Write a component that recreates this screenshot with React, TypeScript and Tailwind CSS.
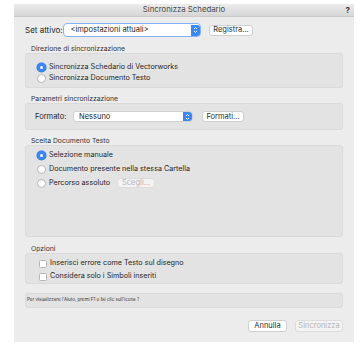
const font = { fontFamily: "Inter, 'Noto Sans', sans-serif" };

function Radio({ checked }: { checked?: boolean }) {
  return checked ? (
    <span className="flex h-[9px] w-[9px] shrink-0 items-center justify-center rounded-full bg-[#3b87f6] shadow-[0_0_0_0.5px_#2f74e0]">
      <span className="h-[3px] w-[3px] rounded-full bg-white" />
    </span>
  ) : (
    <span className="h-[9px] w-[9px] shrink-0 rounded-full border border-[#b5b5b5] bg-white" />
  );
}

function Checkbox() {
  return <span className="h-[8px] w-[8px] shrink-0 rounded-[1.5px] border border-[#b5b5b5] bg-white" />;
}

function Stepper() {
  return (
    <span className="flex h-full w-[9px] items-center justify-center rounded-r-[3px] bg-[#3b87f6]">
      <svg width="5" height="8" viewBox="0 0 5 8" fill="none" stroke="white" strokeWidth="0.9">
        <path d="M1 3 L2.5 1.5 L4 3" />
        <path d="M1 5 L2.5 6.5 L4 5" />
      </svg>
    </span>
  );
}

function Button({ children, w, disabled }: { children: React.ReactNode; w: string; disabled?: boolean }) {
  return (
    <span
      className={`flex h-full ${w} items-center justify-center rounded-[3px] border text-[7.5px] leading-none ${
        disabled ? "border-[#dcdcdc] bg-[#f3f3f3] text-[#b3b3b3]" : "border-[#cfcfcf] bg-white text-[#2a2a2a]"
      }`}
    >
      {children}
    </span>
  );
}

function SectionLabel({ children, mt }: { children: React.ReactNode; mt: string }) {
  return <div className={`${mt} h-[9px] pl-[6px] text-[6.8px] leading-[9px] text-[#333]`}>{children}</div>;
}

export default function App() {
  return (
    <div className="h-[349px] w-[363px] bg-white pl-[14px] pt-[4px]" style={font}>
      <div className="flex h-[338px] w-[340px] flex-col bg-[#ececec] text-[#262626]">
        <div className="relative flex h-[13px] items-center justify-center border-b border-[#cacaca] bg-gradient-to-b from-[#ececec] to-[#d6d6d6] text-[7.8px] text-[#4a4a4a]">
          Sincronizza Schedario
          <span className="absolute right-[4px] top-[2px] text-[8px] font-bold leading-none text-[#333]">?</span>
        </div>

        <div className="flex flex-col px-[11px]">
          <div className="mt-[6px] flex h-[14px] items-center text-[8px]">
            <span className="w-[38px]">Set attivo:</span>
            <span className="flex h-[14px] w-[138px] items-center rounded-[4px] border-[1.5px] border-[#83b3f4] bg-white p-[0.5px] text-[7.5px]">
              <span className="flex-1 pl-[6px]">&lt;impostazioni attuali&gt;</span>
              <Stepper />
            </span>
            <span className="ml-[8px] h-[11px]">
              <Button w="w-[44px]">Registra...</Button>
            </span>
          </div>

          <SectionLabel mt="mt-[7px]">Direzione di sincronizzazione</SectionLabel>
          <div className="flex h-[35px] flex-col rounded-[3px] border border-[#dadada] bg-[#e3e3e3] pl-[11px] pt-[8px] text-[7.2px]">
            <div className="flex h-[11px] items-center gap-[3px]">
              <Radio checked />
              Sincronizza Schedario di Vectorworks
            </div>
            <div className="flex h-[11px] items-center gap-[3px]">
              <Radio />
              Sincronizza Documento Testo
            </div>
          </div>

          <SectionLabel mt="mt-[6px]">Parametri sincronizzazione</SectionLabel>
          <div className="flex h-[27px] items-center rounded-[3px] border border-[#dadada] bg-[#e3e3e3] pl-[9px] text-[7.5px]">
            <span className="w-[38px]">Formato:</span>
            <span className="flex h-[11px] w-[120px] items-center rounded-[3px] border border-[#d0d0d0] bg-white">
              <span className="flex-1 pl-[5px]">Nessuno</span>
              <Stepper />
            </span>
            <span className="ml-[9px] h-[11px]">
              <Button w="w-[42px]">Formati...</Button>
            </span>
          </div>

          <SectionLabel mt="mt-[6px]">Scelta Documento Testo</SectionLabel>
          <div className="flex h-[92px] flex-col rounded-[3px] border border-[#dadada] bg-[#e3e3e3] pl-[11px] pt-[2px] text-[7.2px]">
            <div className="flex h-[14px] items-center gap-[3px]">
              <Radio checked />
              Selezione manuale
            </div>
            <div className="flex h-[14px] items-center gap-[3px]">
              <Radio />
              Documento presente nella stessa Cartella
            </div>
            <div className="flex h-[14px] items-center gap-[3px]">
              <Radio />
              Percorso assoluto
              <span className="ml-[4px] h-[10px]">
                <Button w="w-[38px]" disabled>
                  Scegli...
                </Button>
              </span>
            </div>
          </div>

          <SectionLabel mt="mt-[7px]">Opzioni</SectionLabel>
          <div className="flex h-[31px] flex-col rounded-[3px] border border-[#dadada] bg-[#e3e3e3] pl-[13px] pt-[3px] text-[7.2px]">
            <div className="flex h-[13px] items-center gap-[3px]">
              <Checkbox />
              Inserisci errore come Testo sul disegno
            </div>
            <div className="flex h-[13px] items-center gap-[3px]">
              <Checkbox />
              Considera solo i Simboli inseriti
            </div>
          </div>

          <div className="mt-[9px] flex h-[15px] items-center rounded-[3px] border border-[#dadada] bg-[#e3e3e3] pl-[1px] text-[4.5px] text-[#333]">
            Per visualizzare l'Aiuto, premi F1 o fai clic sull'icona ?
          </div>

          <div className="mt-[12px] flex h-[12px] justify-end gap-[8px]">
            <Button w="w-[39px]">Annulla</Button>
            <Button w="w-[48px]" disabled>
              Sincronizza
            </Button>
          </div>
        </div>
      </div>
    </div>
  );
}
